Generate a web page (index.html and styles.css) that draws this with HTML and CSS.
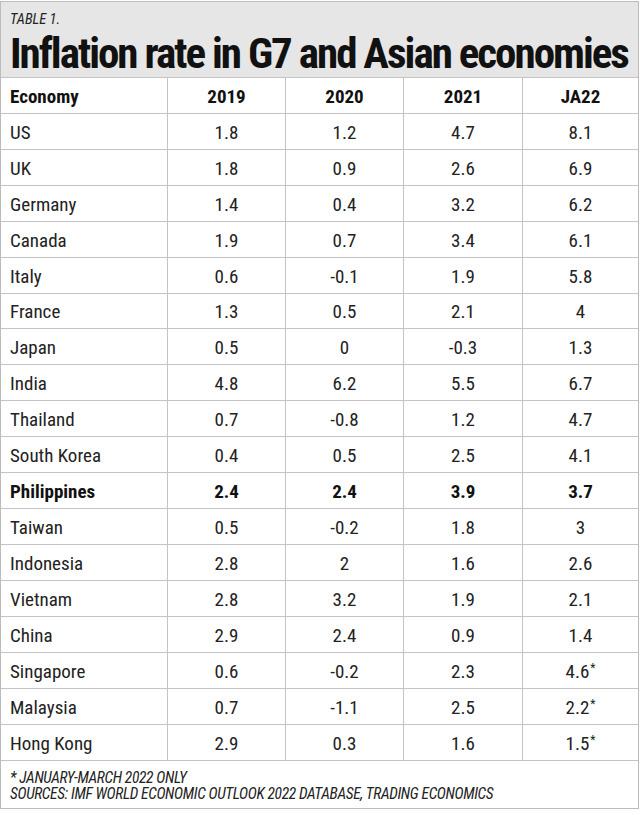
FILE: index.html
```html
<!DOCTYPE html>
<html lang="en">
<head>
<meta charset="utf-8">
<title>Table 1. Inflation rate in G7 and Asian economies</title>
<link rel="stylesheet" href="styles.css">
</head>
<body>
<div class="card">
  <header class="card-head">
    <p class="label">TABLE 1.</p>
    <h1 class="title">Inflation rate in G7 and Asian economies</h1>
  </header>
  <table class="data">
    <thead>
      <tr><th class="name">Economy</th><th>2019</th><th>2020</th><th>2021</th><th>JA22</th></tr>
    </thead>
    <tbody>
      <tr><td class="name">US</td><td>1.8</td><td>1.2</td><td>4.7</td><td>8.1</td></tr>
      <tr><td class="name">UK</td><td>1.8</td><td>0.9</td><td>2.6</td><td>6.9</td></tr>
      <tr><td class="name">Germany</td><td>1.4</td><td>0.4</td><td>3.2</td><td>6.2</td></tr>
      <tr><td class="name">Canada</td><td>1.9</td><td>0.7</td><td>3.4</td><td>6.1</td></tr>
      <tr><td class="name">Italy</td><td>0.6</td><td>-0.1</td><td>1.9</td><td>5.8</td></tr>
      <tr><td class="name">France</td><td>1.3</td><td>0.5</td><td>2.1</td><td>4</td></tr>
      <tr><td class="name">Japan</td><td>0.5</td><td>0</td><td>-0.3</td><td>1.3</td></tr>
      <tr><td class="name">India</td><td>4.8</td><td>6.2</td><td>5.5</td><td>6.7</td></tr>
      <tr><td class="name">Thailand</td><td>0.7</td><td>-0.8</td><td>1.2</td><td>4.7</td></tr>
      <tr><td class="name">South Korea</td><td>0.4</td><td>0.5</td><td>2.5</td><td>4.1</td></tr>
      <tr class="highlight"><td class="name">Philippines</td><td>2.4</td><td>2.4</td><td>3.9</td><td>3.7</td></tr>
      <tr><td class="name">Taiwan</td><td>0.5</td><td>-0.2</td><td>1.8</td><td>3</td></tr>
      <tr><td class="name">Indonesia</td><td>2.8</td><td>2</td><td>1.6</td><td>2.6</td></tr>
      <tr><td class="name">Vietnam</td><td>2.8</td><td>3.2</td><td>1.9</td><td>2.1</td></tr>
      <tr><td class="name">China</td><td>2.9</td><td>2.4</td><td>0.9</td><td>1.4</td></tr>
      <tr><td class="name">Singapore</td><td>0.6</td><td>-0.2</td><td>2.3</td><td>4.6<sup>*</sup></td></tr>
      <tr><td class="name">Malaysia</td><td>0.7</td><td>-1.1</td><td>2.5</td><td>2.2<sup>*</sup></td></tr>
      <tr><td class="name">Hong Kong</td><td>2.9</td><td>0.3</td><td>1.6</td><td>1.5<sup>*</sup></td></tr>
    </tbody>
  </table>
  <footer class="notes">
    <p>* JANUARY-MARCH 2022 ONLY</p>
    <p>SOURCES: IMF WORLD ECONOMIC OUTLOOK 2022 DATABASE, TRADING ECONOMICS</p>
  </footer>
</div>
</body>
</html>
```
FILE: styles.css
```css
html, body {
  margin: 0;
  padding: 0;
  background: #ffffff;
}

body {
  padding-top: 1px;
  font-family: "Roboto Condensed", "Liberation Sans Narrow", Roboto, "Liberation Sans", sans-serif;
  color: #222222;
}

.card {
  width: 639px;
  box-sizing: border-box;
  border: 1px solid #bcbcbc;
  background: #ffffff;
}

.card-head {
  background: #e6e6e6;
  padding: 10px 9px 2px;
}

.label {
  margin: 0 0 3px;
  font-size: 14.5px;
  line-height: 16px;
  font-style: italic;
  color: #222222;
}

.title {
  margin: 0;
  font-size: 43px;
  line-height: 44px;
  font-weight: 700;
  letter-spacing: -2px;
  color: #111111;
  white-space: nowrap;
}

.data {
  width: 100%;
  table-layout: fixed;
  border-collapse: separate;
  border-spacing: 0;
  border-top: 1px solid #c4c4c4;
}

.data th,
.data td {
  box-sizing: border-box;
  height: 35.93px;
  padding: 2px 0 0;
  border-bottom: 1px solid #c4c4c4;
  border-right: 1px solid #c4c4c4;
  text-align: center;
  vertical-align: middle;
  font-size: 19px;
  line-height: normal;
  white-space: nowrap;
}

.data th {
  font-weight: 700;
  color: #111111;
}

.data th:nth-child(1) { width: 167px; }
.data th:nth-child(2) { width: 118px; }
.data th:nth-child(3) { width: 118px; }
.data th:nth-child(4) { width: 119px; }

.data th:last-child,
.data td:last-child {
  border-right: none;
}

.data .name {
  text-align: left;
  padding-left: 9px;
}

.data .highlight td {
  font-weight: 700;
  color: #111111;
}

.data sup {
  font-size: 12px;
  line-height: 0;
  vertical-align: 6px;
  margin-left: 1px;
}

.notes {
  padding: 9px 9px 6px;
  font-style: italic;
  font-size: 15.5px;
  line-height: 16px;
  letter-spacing: -0.35px;
  color: #222222;
}

.notes p {
  margin: 0;
}
```
